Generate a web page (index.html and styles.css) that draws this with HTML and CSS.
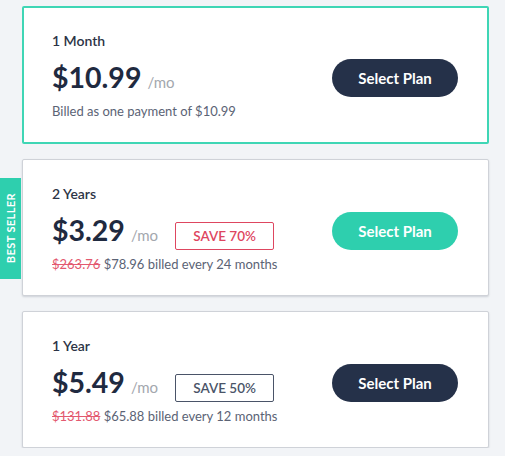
FILE: index.html
```html
<!DOCTYPE html>
<html lang="en">
<head>
<meta charset="utf-8">
<title>Plans</title>
<link rel="stylesheet" href="styles.css">
</head>
<body>
<div class="plans">
  <div class="card card-active">
    <div class="info">
      <div class="term">1 Month</div>
      <div class="price-row">
        <span class="price">$10.99</span><span class="per">/mo</span>
      </div>
      <div class="billed">Billed as one payment of $10.99</div>
    </div>
    <button class="btn btn-dark">Select Plan</button>
  </div>

  <div class="card card-best">
    <div class="tab"><span>BEST SELLER</span></div>
    <div class="info">
      <div class="term">2 Years</div>
      <div class="price-row">
        <span class="price">$3.29</span><span class="per">/mo</span>
        <span class="save save-red">SAVE 70%</span>
      </div>
      <div class="billed"><s class="old">$263.76</s> $78.96 billed every 24 months</div>
    </div>
    <button class="btn btn-teal">Select Plan</button>
  </div>

  <div class="card">
    <div class="info">
      <div class="term">1 Year</div>
      <div class="price-row">
        <span class="price">$5.49</span><span class="per">/mo</span>
        <span class="save save-dark">SAVE 50%</span>
      </div>
      <div class="billed"><s class="old">$131.88</s> $65.88 billed every 12 months</div>
    </div>
    <button class="btn btn-dark">Select Plan</button>
  </div>
</div>
</body>
</html>
```
FILE: styles.css
```css
* { box-sizing: border-box; }
html, body {
  margin: 0;
  padding: 0;
  background: #f2f4f7;
  font-family: Lato, "Open Sans", sans-serif;
}
.plans {
  display: flex;
  flex-direction: column;
  gap: 15px;
  width: 467px;
  margin-left: 22px;
  padding-top: 6px;
}
.card {
  position: relative;
  display: flex;
  align-items: center;
  justify-content: space-between;
  background: #fff;
  border: 1px solid #cfd2d8;
  box-shadow: 0 1px 2px rgba(40, 50, 70, 0.18);
  border-radius: 2px;
  padding: 25px 0 23px 29px;
  height: 137px;
}
.card-active {
  border: 2px solid #3fd6b5;
  box-shadow: none;
  padding: 24px 0 23px 28px;
  height: 138px;
}
.info {
  display: flex;
  flex-direction: column;
}
.term {
  font-size: 14px;
  line-height: 17px;
  font-weight: 600;
  color: #2c3446;
}
.price-row {
  display: flex;
  align-items: baseline;
  height: 34px;
  margin-top: 11px;
}
.price {
  font-size: 28.5px;
  line-height: 34px;
  font-weight: 700;
  color: #1f2a40;
}
.per {
  font-size: 15px;
  color: #a3a7ae;
  margin-left: 6px;
}
.save {
  margin-left: 17px;
  font-size: 13.5px;
  line-height: 16px;
  font-weight: 600;
  padding: 5px 0;
  width: 99px;
  text-align: center;
  border-radius: 2px;
}
.save-red {
  color: #de4660;
  border: 1px solid #de4660;
}
.save-dark {
  color: #4a5468;
  border: 1px solid #4a5468;
}
.billed {
  margin-top: 9px;
  font-size: 13px;
  line-height: 16px;
  color: #5b6375;
}
.old {
  color: #e35a70;
}
.btn {
  width: 126px;
  height: 38px;
  margin: 5px 30px 0 0;
  border: none;
  border-radius: 19px;
  font-family: Lato, sans-serif;
  font-size: 15px;
  font-weight: 700;
  color: #fff;
  cursor: pointer;
}
.card-active .btn { margin-right: 29px; }
.btn-dark { background: #253149; }
.btn-teal { background: #2ecfae; }
.tab {
  position: absolute;
  left: -23px;
  top: 18px;
  width: 21px;
  height: 101px;
  background: #2ecfae;
  display: flex;
  align-items: center;
  justify-content: center;
}
.tab span {
  writing-mode: vertical-rl;
  transform: rotate(180deg);
  color: #fff;
  font-size: 11px;
  font-weight: 700;
  letter-spacing: 0.4px;
  white-space: nowrap;
}
```
